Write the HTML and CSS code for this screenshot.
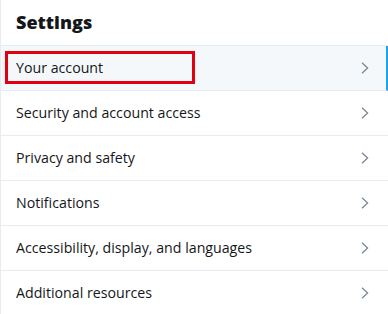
FILE: index.html
```html
<!DOCTYPE html>
<html lang="en">
<head>
    <meta charset="UTF-8">
    <title>Settings</title>
    <link rel="stylesheet" href="styles.css">
</head>
<body>
    <div class="panel">
        <header class="panel-header">
            <h1>Settings</h1>
        </header>
        <ul class="settings-list">
            <li class="settings-item active">
                <span class="highlight">Your account</span>
                <svg class="chevron" viewBox="0 0 8 12"><path d="M1 0.8 L6.6 6 L1 11.2" /></svg>
            </li>
            <li class="settings-item">
                <span>Security and account access</span>
                <svg class="chevron" viewBox="0 0 8 12"><path d="M1 0.8 L6.6 6 L1 11.2" /></svg>
            </li>
            <li class="settings-item">
                <span>Privacy and safety</span>
                <svg class="chevron" viewBox="0 0 8 12"><path d="M1 0.8 L6.6 6 L1 11.2" /></svg>
            </li>
            <li class="settings-item">
                <span>Notifications</span>
                <svg class="chevron" viewBox="0 0 8 12"><path d="M1 0.8 L6.6 6 L1 11.2" /></svg>
            </li>
            <li class="settings-item">
                <span>Accessibility, display, and languages</span>
                <svg class="chevron" viewBox="0 0 8 12"><path d="M1 0.8 L6.6 6 L1 11.2" /></svg>
            </li>
            <li class="settings-item">
                <span>Additional resources</span>
                <svg class="chevron" viewBox="0 0 8 12"><path d="M1 0.8 L6.6 6 L1 11.2" /></svg>
            </li>
        </ul>
    </div>
</body>
</html>
```

FILE: styles.css
```css
:root {
    --border-color: #e6ecf0;
    --text-color: #14171a;
    --muted-color: #657786;
    --active-bg: #f5f8fa;
    --accent: #1da1f2;
}

*, *::before, *::after {
    margin: 0;
    padding: 0;
    box-sizing: border-box;
}

body {
    font-family: 'Open Sans', 'Noto Sans', sans-serif;
    background-color: #ffffff;
    color: var(--text-color);
    width: 388px;
    height: 314px;
    overflow: hidden;
}

.panel {
    border-left: 1px solid var(--border-color);
    height: 314px;
}

.panel-header {
    height: 46px;
    padding: 0 0 2px 15px;
    display: flex;
    align-items: center;
    border-bottom: 1px solid var(--border-color);
}

h1 {
    font-size: 18px;
    font-weight: 800;
}

.settings-list {
    list-style: none;
}

.settings-item {
    height: 45px;
    display: flex;
    align-items: center;
    justify-content: space-between;
    padding: 0 19px 2px 15px;
    font-size: 14.2px;
    border-bottom: 1px solid var(--border-color);
    position: relative;
}

.settings-item.active {
    background-color: var(--active-bg);
    border-right: 2px solid var(--accent);
    padding-right: 17px;
}

.highlight::before {
    content: '';
    position: absolute;
    left: 4px;
    top: 5px;
    width: 190px;
    height: 33px;
    border: 3px solid #e0000f;
}

.chevron {
    width: 8px;
    height: 12px;
    margin-top: 2px;
    fill: none;
    stroke: #7a8894;
    stroke-width: 1.3;
}
```
